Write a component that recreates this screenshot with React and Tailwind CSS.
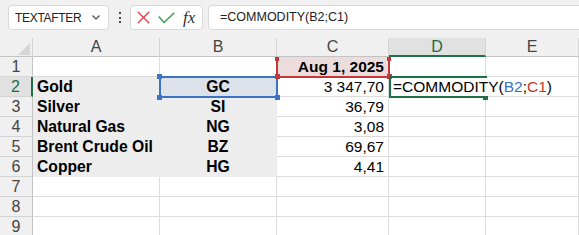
import React from "react";

const rows = [
  { n: 1, a: "", b: "", c: "Aug 1, 2025" },
  { n: 2, a: "Gold", b: "GC", c: "3 347,70" },
  { n: 3, a: "Silver", b: "SI", c: "36,79" },
  { n: 4, a: "Natural Gas", b: "NG", c: "3,08" },
  { n: 5, a: "Brent Crude Oil", b: "BZ", c: "69,67" },
  { n: 6, a: "Copper", b: "HG", c: "4,41" },
  { n: 7, a: "", b: "", c: "" },
  { n: 8, a: "", b: "", c: "" },
  { n: 9, a: "", b: "", c: "" },
];

function HeaderRow() {
  const base =
    "h-full shrink-0 border-r border-b border-r-[#d4d4d4] border-b-[#c4c4c4] flex items-center justify-center text-[16px] text-[#444]";
  return (
    <div className="flex h-[19px]">
      <div className={`w-[33px] ${base} border-r-[#c4c4c4] relative`}>
        <svg width="12" height="12" viewBox="0 0 12 12" className="absolute left-[18px] top-[5px]">
          <polygon points="12,0 12,12 0,12" fill="#d6d6d6" />
        </svg>
      </div>
      <div className={`w-[127px] ${base}`}>A</div>
      <div className={`w-[117px] ${base}`}>B</div>
      <div className={`w-[112px] ${base}`}>C</div>
      <div className="w-[97px] h-full shrink-0 border-r border-r-[#d4d4d4] border-b-2 border-b-[#1e7145] bg-[#e1e1e1] flex items-center justify-center text-[16px] text-[#1e6b47]">
        D
      </div>
      <div className={`w-[93px] ${base}`}>E</div>
    </div>
  );
}

function DataRow({ r }) {
  const filled = r.n >= 2 && r.n <= 6;
  const sel = r.n === 2;
  const grid = "h-full shrink-0 border-r border-b border-[#dcdcdc] flex items-center";
  const fill = "h-full shrink-0 border-r border-b border-[#ededed] bg-[#ededed] flex items-center";
  return (
    <div className="flex h-[20px] leading-[20px]">
      <div
        className={
          sel
            ? "w-[33px] h-full shrink-0 border-r-2 border-r-[#1e7145] border-b border-b-[#d4d4d4] bg-[#e1e1e1] flex items-center justify-center text-[16px] text-[#1e6b47]"
            : "w-[33px] h-full shrink-0 border-r border-b border-r-[#c4c4c4] border-b-[#d4d4d4] bg-[#f0f0f0] flex items-center justify-center text-[16px] text-[#444]"
        }
      >
        {r.n}
      </div>
      <div className={`w-[127px] pl-[4px] font-bold text-[15.7px] text-black ${filled ? fill : grid + " bg-white"}`}>
        {r.a}
      </div>
      <div
        className={`w-[117px] justify-center font-bold text-[15.7px] text-black ${
          sel ? "h-full shrink-0 border-r border-b border-[#dce1ea] bg-[#dce1ea] flex items-center" : filled ? fill : grid + " bg-white"
        }`}
      >
        {r.b}
      </div>
      <div
        className={`w-[112px] justify-end pr-[4px] text-[15.5px] text-black ${grid} ${
          r.n === 1 ? "bg-[#ecdcdc] font-bold" : "bg-white"
        }`}
      >
        {r.c}
      </div>
      <div
        className={`w-[97px] ${grid} bg-white ${sel ? "border-r-transparent relative z-10 overflow-visible" : ""}`}
      >
        {sel && (
          <span className="pl-[4px] whitespace-nowrap text-[15.5px] text-black">
            =COMMODITY(<span className="text-[#3a6fc4]">B2</span>;<span className="text-[#c0392b]">C1</span>)
          </span>
        )}
      </div>
      <div className={`w-[93px] ${grid} bg-white`}></div>
    </div>
  );
}

export default function App() {
  return (
    <div className="relative w-[579px] h-[235px] overflow-hidden bg-[#f0f0f0] font-['Liberation_Sans',Arial,sans-serif]">
      {/* Toolbar */}
      <div className="h-[38px] flex items-start pt-[5px] pl-[8px]">
        <div className="w-[101px] h-[25px] shrink-0 rounded-[4px] border border-[#d9d9d9] bg-white flex items-center justify-between pl-[6px] pr-[8px]">
          <span className="text-[12px] tracking-[-0.3px] text-[#222]">TEXTAFTER</span>
          <svg width="8" height="5" viewBox="0 0 8 5">
            <polyline points="0.5,0.5 4,4 7.5,0.5" fill="none" stroke="#444" strokeWidth="1.1" />
          </svg>
        </div>
        <div className="w-[21px] h-[25px] shrink-0 flex flex-col items-center justify-center gap-[2.5px]">
          <div className="w-[2px] h-[2px] bg-[#444]" />
          <div className="w-[2px] h-[2px] bg-[#444]" />
          <div className="w-[2px] h-[2px] bg-[#444]" />
        </div>
        <div className="w-[73px] h-[25px] shrink-0 rounded-[4px] border border-[#d9d9d9] bg-white flex items-center pl-[6px]">
          <svg width="13" height="13" viewBox="0 0 13 13">
            <line x1="0.8" y1="0.8" x2="12.2" y2="12.2" stroke="#e0474c" strokeWidth="1.4" />
            <line x1="12.2" y1="0.8" x2="0.8" y2="12.2" stroke="#e0474c" strokeWidth="1.4" />
          </svg>
          <svg width="17" height="12" viewBox="0 0 17 12" className="ml-[8px]">
            <polyline points="0.7,4.5 6,10.5 16.3,0.7" fill="none" stroke="#3a9a56" strokeWidth="1.4" />
          </svg>
          <span className="ml-[8px] italic font-['Liberation_Serif',serif] text-[17px] leading-none text-[#333]">fx</span>
        </div>
        <div className="ml-[5px] w-[380px] h-[25px] shrink-0 rounded-l-[4px] border border-[#d9d9d9] bg-white flex items-center pl-[11px]">
          <span className="text-[12.5px] text-[#222]">=COMMODITY(B2;C1)</span>
        </div>
      </div>

      {/* Grid */}
      <HeaderRow />
      {rows.map((r) => (
        <DataRow key={r.n} r={r} />
      ))}

      {/* B2 reference box (blue) */}
      <div className="absolute left-[159px] top-[76px] w-[119px] h-[22px] border-2 border-[#3b73c6] z-20" />
      <div className="absolute left-[157px] top-[74px] w-[5px] h-[5px] bg-[#3b73c6] z-20" />
      <div className="absolute left-[157px] top-[95px] w-[5px] h-[5px] bg-[#3b73c6] z-20" />
      <div className="absolute left-[275px] top-[95px] w-[5px] h-[5px] bg-[#3b73c6] z-20" />

      {/* C1 reference box (red) */}
      <div className="absolute left-[276px] top-[57px] w-[114px] h-[21px] border-l-2 border-r-2 border-b-2 border-[#c4373a] z-20" />
      <div className="absolute left-[275px] top-[57px] w-[4px] h-[4px] bg-[#c4373a] z-20" />
      <div className="absolute left-[387px] top-[57px] w-[4px] h-[4px] bg-[#c4373a] z-20" />
      <div className="absolute left-[275px] top-[74px] w-[5px] h-[5px] bg-[#c4373a] z-20" />
      <div className="absolute left-[387px] top-[74px] w-[5px] h-[5px] bg-[#c4373a] z-20" />

      {/* D2 active cell (green) */}
      <div className="absolute left-[389px] top-[76px] w-[98px] h-[22px] border-l-2 border-t-2 border-b-2 border-[#1e7145] z-20" />
      <div className="absolute left-[483px] top-[96px] w-[5px] h-[4px] bg-[#1e7145] z-20" />
    </div>
  );
}
